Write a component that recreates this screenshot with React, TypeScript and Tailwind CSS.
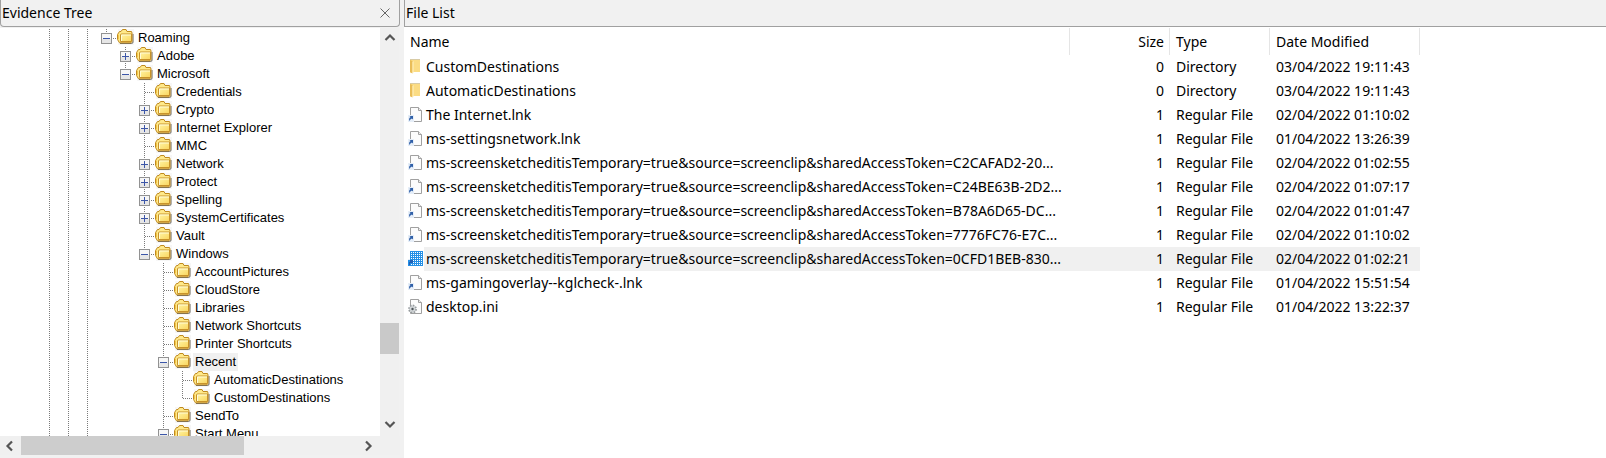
import { useState } from 'react';

type Cell = ' ' | '|' | 'T' | 'L';
type Toggle = 'open' | 'closed';
type TreeRow = { name: string; cells: Cell[]; toggle?: Toggle };
type FileKind = 'folder' | 'link' | 'config';
type FileRow = { name: string; size: number; type: string; date: string; kind: FileKind };

const base: Cell[] = ['|', '|', '|'];
const b4: Cell[] = [...base, ' '];
const b5: Cell[] = [...b4, ' '];
const b6: Cell[] = [...b5, ' '];
const b7: Cell[] = [...b6, '|'];

const tree: TreeRow[] = [
  { name: 'Roaming', cells: [...base, 'L'], toggle: 'open' },
  { name: 'Adobe', cells: [...b4, 'T'], toggle: 'closed' },
  { name: 'Microsoft', cells: [...b4, 'L'], toggle: 'open' },
  { name: 'Credentials', cells: [...b5, 'T'] },
  { name: 'Crypto', cells: [...b5, 'T'], toggle: 'closed' },
  { name: 'Internet Explorer', cells: [...b5, 'T'], toggle: 'closed' },
  { name: 'MMC', cells: [...b5, 'T'] },
  { name: 'Network', cells: [...b5, 'T'], toggle: 'closed' },
  { name: 'Protect', cells: [...b5, 'T'], toggle: 'closed' },
  { name: 'Spelling', cells: [...b5, 'T'], toggle: 'closed' },
  { name: 'SystemCertificates', cells: [...b5, 'T'], toggle: 'closed' },
  { name: 'Vault', cells: [...b5, 'T'] },
  { name: 'Windows', cells: [...b5, 'L'], toggle: 'open' },
  { name: 'AccountPictures', cells: [...b6, 'T'] },
  { name: 'CloudStore', cells: [...b6, 'T'] },
  { name: 'Libraries', cells: [...b6, 'T'] },
  { name: 'Network Shortcuts', cells: [...b6, 'T'] },
  { name: 'Printer Shortcuts', cells: [...b6, 'T'] },
  { name: 'Recent', cells: [...b6, 'T'], toggle: 'open' },
  { name: 'AutomaticDestinations', cells: [...b7, 'T'] },
  { name: 'CustomDestinations', cells: [...b7, 'L'] },
  { name: 'SendTo', cells: [...b6, 'T'] },
  { name: 'Start Menu', cells: [...b6, 'T'], toggle: 'open' },
];

const clip = 'ms-screensketcheditisTemporary=true&source=screenclip&sharedAccessToken=';

const files: FileRow[] = [
  { name: 'CustomDestinations', size: 0, type: 'Directory', date: '03/04/2022 19:11:43', kind: 'folder' },
  { name: 'AutomaticDestinations', size: 0, type: 'Directory', date: '03/04/2022 19:11:43', kind: 'folder' },
  { name: 'The Internet.lnk', size: 1, type: 'Regular File', date: '02/04/2022 01:10:02', kind: 'link' },
  { name: 'ms-settingsnetwork.lnk', size: 1, type: 'Regular File', date: '01/04/2022 13:26:39', kind: 'link' },
  { name: clip + 'C2CAFAD2-20...', size: 1, type: 'Regular File', date: '02/04/2022 01:02:55', kind: 'link' },
  { name: clip + 'C24BE63B-2D2...', size: 1, type: 'Regular File', date: '02/04/2022 01:07:17', kind: 'link' },
  { name: clip + 'B78A6D65-DC...', size: 1, type: 'Regular File', date: '02/04/2022 01:01:47', kind: 'link' },
  { name: clip + '7776FC76-E7C...', size: 1, type: 'Regular File', date: '02/04/2022 01:10:02', kind: 'link' },
  { name: clip + '0CFD1BEB-830...', size: 1, type: 'Regular File', date: '02/04/2022 01:02:21', kind: 'link' },
  { name: 'ms-gamingoverlay--kglcheck-.lnk', size: 1, type: 'Regular File', date: '01/04/2022 15:51:54', kind: 'link' },
  { name: 'desktop.ini', size: 1, type: 'Regular File', date: '01/04/2022 13:22:37', kind: 'config' },
];

function Branch({ cell, toggle }: { cell: Cell; toggle?: Toggle }) {
  return (
    <svg width="19" height="18" viewBox="0 0 19 18" className="block shrink-0" shapeRendering="crispEdges" aria-hidden="true">
      <g stroke="#7a7a7a" strokeDasharray="1 1">
        {cell !== ' ' && <path d={cell === 'L' ? 'M9.5 0V9' : 'M9.5 0V18'} />}
        {(cell === 'T' || cell === 'L') && <path d="M10 9.5H19" />}
      </g>
      {toggle && (
        <g>
          <rect x="4.5" y="4.5" width="10" height="10" fill="#f6f6f6" stroke="#929292" />
          <rect x="5" y="10" width="9" height="4" fill="#e6e6e6" />
          <path d={toggle === 'open' ? 'M6 9.5H13' : 'M6 9.5H13M9.5 6V13'} stroke="#3c56a8" />
        </g>
      )}
    </svg>
  );
}

function TreeFolder() {
  return (
    <svg width="18" height="18" viewBox="-1 0 18 18" className="block shrink-0" aria-hidden="true">
      <rect x="1" y="0" width="16" height="16" fill="#f7f7f7" />
      <path d="M3 14.500h11.500q1.500 0 1.500-1.500V5" fill="none" stroke="#6f6a60" />
      <path d="M.5 5.500L2.500 2.500H4L5.500.5H9L10 2.500h4.500l.5 1.500v8.500l-1 1.300H2.500L.5 10.500z" fill="#ffe98a" stroke="#c08a1e" />
      <path d="M1.500 5.500v5" stroke="#f3c64a" />
      <path d="M3.500 12.500V6q0-1 1-1h10v7.500z" fill="url(#tree-folder)" stroke="#c7922a" />
      <path d="M4.500 12V6H14" fill="none" stroke="#fffcd8" />
    </svg>
  );
}

function FileIcon({ kind, selected }: { kind: FileKind; selected: boolean }) {
  return (
    <svg width="16" height="16" viewBox="0 0 16 16" className="block shrink-0" aria-hidden="true">
      {kind === 'folder' ? (
        <g>
          <path d="M2 1h10v12H4.500V14L2 13z" fill="#fbdc84" />
          <path d="M2 1l2.500 1v12.500L2 13.300z" fill="#e9bd58" />
          <path d="M4.500 3l1-1v12l-1 .5z" fill="#fff1c2" />
          <path d="M2 .5h10" stroke="#d8cba6" />
        </g>
      ) : (
        <g>
          <path d="M2.500.5h8l3 3v11h-11z" fill="#fcfcfc" stroke="#a0a0a0" />
          <path d="M10.500.5v3h3" fill="#eee" stroke="#a0a0a0" />
          {kind === 'link' ? (
            <g>
              <rect x="0" y="8" width="6" height="7" fill="#e6eef8" />
              <path d="M1.500 9H5v3.500L3.900 11.400Q2 12 1.500 14 0.300 11.500 2.600 10.100z" fill="#2f5fa8" />
            </g>
          ) : (
            <g>
              <circle cx="4.500" cy="10" r="3.600" fill="#d3d7d9" stroke="#979c9f" strokeWidth="1.600" strokeDasharray="1.600 1.200" />
              <circle cx="4.500" cy="10" r="1.200" fill="#4b5357" />
            </g>
          )}
        </g>
      )}
      {selected && (
        <g shapeRendering="crispEdges">
          <path d="M2 0h13v15H0V9h2z" fill="#2590e6" />
          <path
            d="M3 1.5h11M3 3.5h11M3 5.5h11M3 7.5h11M5 9.5h9M5 11.5h9M1 13.5h13"
            stroke="#fff"
            strokeDasharray="1 1"
          />
          <path d="M1.500 9H5v3.500L3.900 11.400Q2 12 1.500 14 0.300 11.500 2.600 10.100z" fill="#2360b4" />
        </g>
      )}
    </svg>
  );
}

const arrows = {
  up: 'M1.500 8L6 3.500 10.500 8',
  down: 'M1.500 4L6 8.500 10.500 4',
  left: 'M8 1.500L3.500 6 8 10.500',
  right: 'M4 1.500L8.500 6 4 10.500',
};

function ScrollButton({ dir }: { dir: keyof typeof arrows }) {
  return (
    <button type="button" aria-label={'Scroll ' + dir} className="flex size-[19px] shrink-0 items-center justify-center hover:bg-[#dadada]">
      <svg width="12" height="12" viewBox="0 0 12 12" aria-hidden="true">
        <path d={arrows[dir]} fill="none" stroke="#555" strokeWidth="2.200" />
      </svg>
    </button>
  );
}

export default function App() {
  const [folder, setFolder] = useState('Recent');
  const [file, setFile] = useState(8);

  return (
    <div className="flex h-screen gap-1 overflow-hidden bg-[#f1f1f1] font-['Noto_Sans','Open_Sans',sans-serif] text-sm text-black">
      <svg width="0" height="0" className="absolute" aria-hidden="true">
        <defs>
          <linearGradient id="tree-folder" x1="0" y1="0" x2="1" y2="1">
            <stop offset="0" stopColor="#fff6a8" />
            <stop offset="1" stopColor="#fad55c" />
          </linearGradient>
        </defs>
      </svg>

      <aside className="flex w-[400px] shrink-0 flex-col">
        <header className="flex h-[27px] shrink-0 items-center justify-between rounded-b-sm border-x border-b border-[#a0a0a0] pr-2 pl-px">
          <h2>Evidence Tree</h2>
          <button type="button" aria-label="Close" className="flex size-3 items-center justify-center">
            <svg width="10" height="10" viewBox="0 0 10 10" aria-hidden="true">
              <path d="M.5.5l9 9M9.500.5l-9 9" stroke="#666" />
            </svg>
          </button>
        </header>
        <div className="mt-px flex min-h-0 flex-1">
          <ul className="min-w-0 flex-1 overflow-hidden bg-white pt-px pl-10 font-['Liberation_Sans',Arial,sans-serif] text-[13px]/[18px]">
            {tree.map((row) => (
              <li key={row.name} className="flex h-[18px]">
                {row.cells.map((cell, i) => (
                  <Branch key={i} cell={cell} toggle={i === row.cells.length - 1 ? row.toggle : undefined} />
                ))}
                <TreeFolder />
                <button
                  type="button"
                  onClick={() => setFolder(row.name)}
                  className={'ml-0.5 px-0.5 whitespace-nowrap ' + (folder === row.name ? 'bg-[#f0f0f0]' : '')}
                >
                  {row.name}
                </button>
              </li>
            ))}
          </ul>
          <div className="mr-px flex w-[19px] shrink-0 flex-col bg-[#f0f0f0] pb-[3px]">
            <ScrollButton dir="up" />
            <div className="flex flex-1 flex-col">
              <div className="grow-[276]" />
              <div className="h-[31px] bg-[#c9c9c9]" />
              <div className="grow-[60]" />
            </div>
            <ScrollButton dir="down" />
          </div>
        </div>
        <div className="mb-[3px] flex h-[19px] shrink-0 bg-[#f0f0f0] pr-[23px]">
          <ScrollButton dir="left" />
          <div className="flex flex-1 pl-0.5">
            <div className="w-[223px] bg-[#cdcdcd]" />
          </div>
          <ScrollButton dir="right" />
        </div>
      </aside>

      <main className="flex min-w-0 flex-1 flex-col">
        <header className="flex h-[27px] shrink-0 items-center border-b border-l border-[#a0a0a0] pl-px">
          <h2>File List</h2>
        </header>
        <div className="flex-1 overflow-hidden bg-white pt-px">
          <table className="w-[1015px] table-fixed border-separate border-spacing-0 text-left leading-6 whitespace-nowrap">
            <colgroup>
              <col className="w-[666px]" />
              <col className="w-[100px]" />
              <col className="w-[100px]" />
              <col className="w-[150px]" />
            </colgroup>
            <thead>
              <tr className="h-[27px]">
                <th scope="col" className="border-r border-[#e5e5e5] p-0 pl-1.5 font-normal">Name</th>
                <th scope="col" className="border-r border-[#e5e5e5] p-0 pr-[5px] text-right font-normal">Size</th>
                <th scope="col" className="border-r border-[#e5e5e5] p-0 pl-1.5 font-normal">Type</th>
                <th scope="col" className="border-r border-[#e5e5e5] p-0 pl-1.5 font-normal">Date Modified</th>
              </tr>
            </thead>
            <tbody>
              {files.map((f, i) => {
                const bg = i === file ? 'bg-[#f0f0f0]' : '';
                return (
                  <tr key={f.name} className="h-6" onClick={() => setFile(i)}>
                    <td className="p-0">
                      <div className="flex h-6 items-center pl-1">
                        <FileIcon kind={f.kind} selected={i === file} />
                        <span className={'h-6 flex-1 pl-0.5 leading-6 ' + bg}>{f.name}</span>
                      </div>
                    </td>
                    <td className={'p-0 pr-1.5 text-right ' + bg}>{f.size}</td>
                    <td className={'p-0 pl-1.5 ' + bg}>{f.type}</td>
                    <td className={'p-0 pl-1.5 ' + bg}>{f.date}</td>
                  </tr>
                );
              })}
            </tbody>
          </table>
        </div>
      </main>
    </div>
  );
}
